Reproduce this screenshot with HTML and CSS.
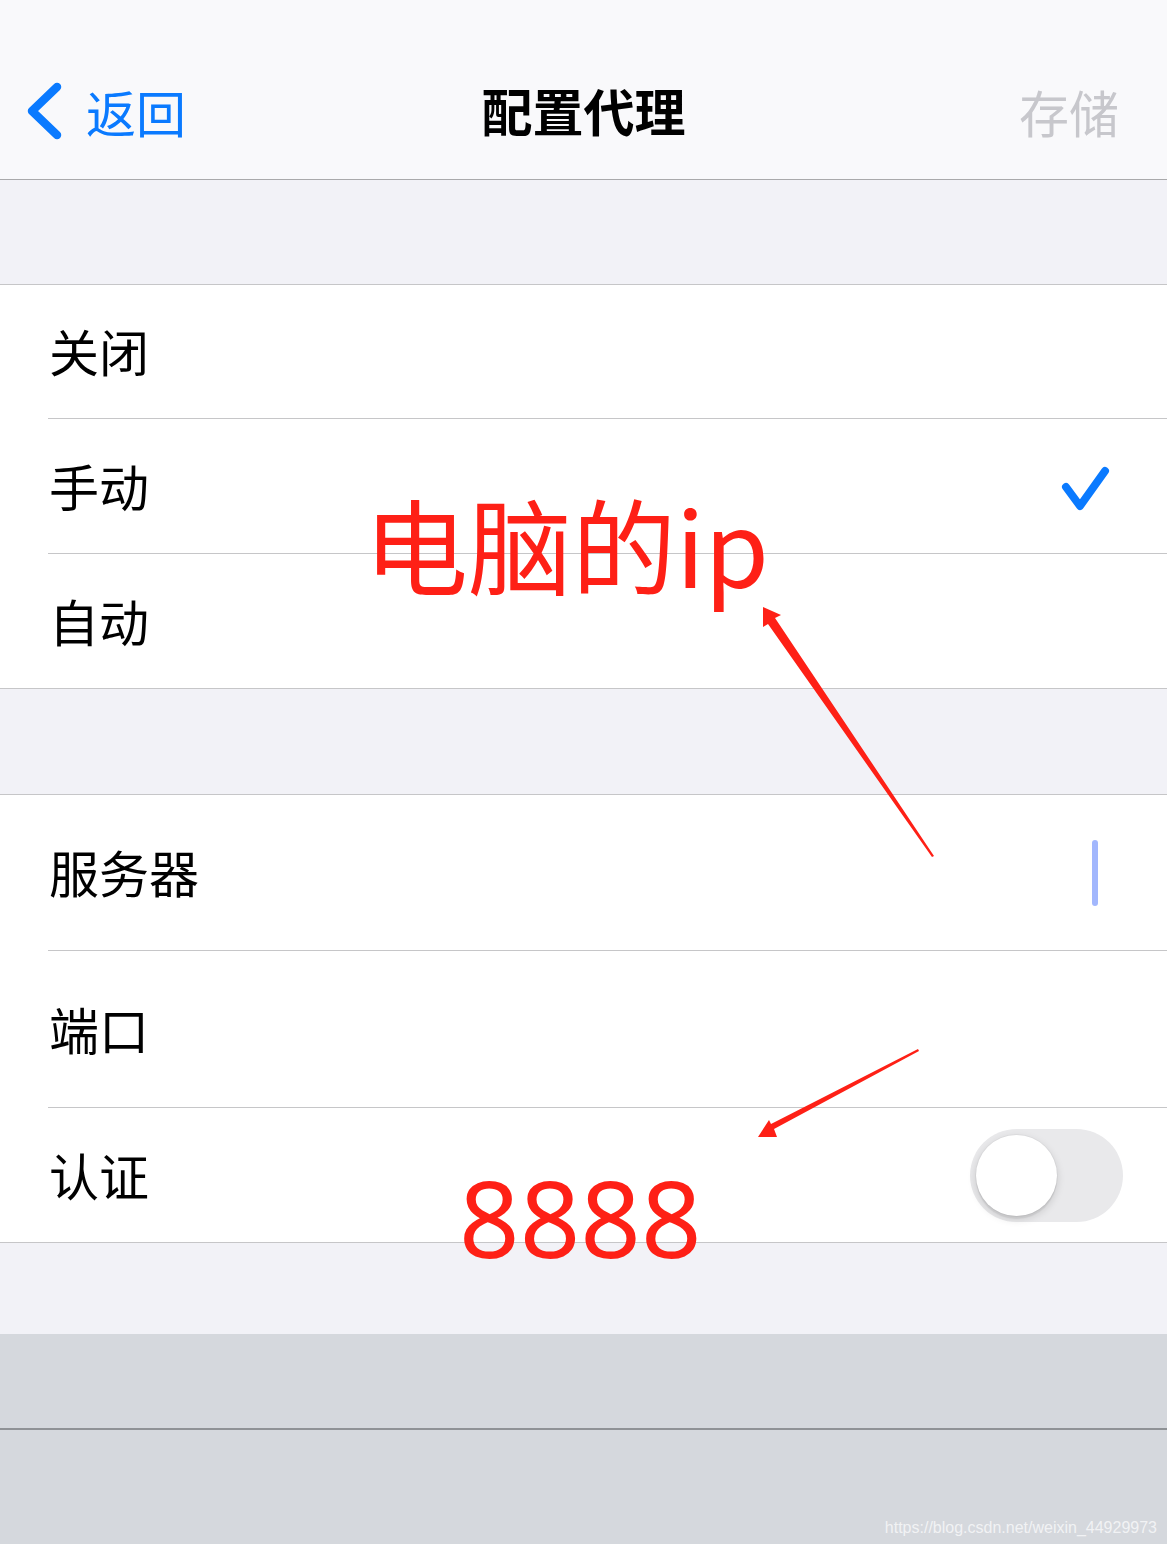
FILE: index.html
```html
<!DOCTYPE html>
<html lang="zh-CN">
<head>
<meta charset="utf-8">
<title>配置代理</title>
<link rel="stylesheet" href="styles.css">
</head>
<body>
<div class="page">
  <header class="nav">
    <div class="nav-left">
      <svg class="chev" width="40" height="60" viewBox="0 0 40 60"><polyline points="31,6 6,30 31,54" fill="none" stroke="#0a7aff" stroke-width="8.5" stroke-linecap="round" stroke-linejoin="round"/></svg>
      <span class="back">返回</span>
    </div>
    <div class="nav-title">配置代理</div>
    <div class="nav-right">存储</div>
  </header>

  <div class="gap g1"></div>

  <section class="group">
    <div class="row"><span class="label">关闭</span></div>
    <div class="row mid"><span class="label">手动</span>
      <svg class="check" width="52" height="50" viewBox="0 0 52 50"><polyline points="6,22 20,41 45,6" fill="none" stroke="#0a7aff" stroke-width="8" stroke-linecap="round" stroke-linejoin="round"/></svg>
    </div>
    <div class="row"><span class="label">自动</span></div>
  </section>

  <div class="gap g2"></div>

  <section class="group">
    <div class="row tall"><span class="label">服务器</span><i class="cursor"></i></div>
    <div class="row tall2"><span class="label">端口</span></div>
    <div class="row"><span class="label">认证</span>
      <div class="toggle"><div class="knob"></div></div>
    </div>
  </section>

  <div class="gap g3"></div>

  <div class="keyboard">
    <div class="kb-top"></div>
    <div class="kb-bottom"><span class="wm">https://blog.csdn.net/weixin_44929973</span></div>
  </div>

  <div class="annot">
    <svg class="arrows" width="1167" height="1544" viewBox="0 0 1167 1544">
      <polygon points="763,607 781,615 775,618 934,856 932,857 768,624 763,627" fill="#fe2016"/>
      <polygon points="918,1049 919,1051 774,1129 777,1137 758,1137 769,1120 771,1124" fill="#fe2016"/>
    </svg>
    <span class="note n-ip">电脑的ip</span>
    <span class="note n-port">8888</span>
  </div>
</div>
</body>
</html>
```

FILE: styles.css
```css
* { box-sizing: border-box; }
html, body { margin: 0; padding: 0; }
body {
  width: 1167px;
  height: 1544px;
  overflow: hidden;
  background: #d5d8dd;
  font-family: "Noto Sans CJK SC", "Noto Sans", sans-serif;
  color: #000;
}
.page {
  position: relative;
  width: 1167px;
  height: 1544px;
  display: flex;
  flex-direction: column;
}

.nav {
  flex: none;
  height: 180px;
  padding-top: 42px;
  background: #f9f9fb;
  border-bottom: 1px solid #a9a9ab;
  display: grid;
  grid-template-columns: 1fr auto 1fr;
  align-items: center;
}
.nav-left { display: flex; align-items: center; padding-left: 26px; }
.chev { display: block; margin-top: 1px; }
.back { color: #0a7aff; font-size: 50px; line-height: 1; margin-left: 20px; }
.nav-title { font-size: 51px; font-weight: 700; line-height: 1; }
.nav-right { justify-self: end; padding-right: 48px; color: #c7c7cc; font-size: 50px; line-height: 1; }

.gap { flex: none; background: #f2f2f7; }
.g1 { height: 104px; }
.g2 { height: 105px; }
.g3 { height: 91px; }

.group {
  flex: none;
  background: #fff;
  border-top: 1px solid #c6c6c8;
  border-bottom: 1px solid #c6c6c8;
  padding-left: 48px;
}
.row {
  height: 134px;
  display: flex;
  align-items: center;
  justify-content: space-between;
  padding-left: 1px;
  padding-right: 45px;
  border-bottom: 1px solid #c6c6c8;
  font-size: 50px;
  line-height: 1;
}
.label { margin-top: -3px; }
.row.mid { height: 135px; }
.row.tall { height: 156px; }
.row.tall2 { height: 157px; }
.row:last-child { border-bottom: none; height: 134px; }
.check { display: block; margin-right: 10px; margin-top: 8px; }
.cursor {
  display: block;
  width: 6px;
  height: 66px;
  border-radius: 3px;
  background: #a2b7fd;
  margin-right: 24px;
  margin-top: 1px;
}
.toggle {
  width: 153px;
  height: 93px;
  border-radius: 47px;
  background: #e9e9eb;
  margin-right: -1px;
  margin-top: 1px;
  padding: 6px;
}
.knob {
  width: 81px;
  height: 81px;
  border-radius: 50%;
  background: #fff;
  box-shadow: 0 3px 8px rgba(0,0,0,0.15), 0 3px 1px rgba(0,0,0,0.06), 0 0 0 1px rgba(0,0,0,0.03);
}

.keyboard { flex: 1; background: #d5d8dd; display: flex; flex-direction: column; }
.kb-top { flex: none; height: 96px; border-bottom: 2px solid #8f9296; }
.kb-bottom { flex: 1; display: flex; justify-content: flex-end; align-items: flex-end; padding: 0 10px 8px 0; }
.wm {
  font-family: "Liberation Sans", Arial, sans-serif;
  font-size: 16px;
  color: rgba(255,255,255,0.7);
  line-height: 1;
}

.annot { position: absolute; left: 0; top: 0; width: 1167px; height: 1544px; pointer-events: none; }
.arrows { position: absolute; left: 0; top: 0; }
.note { position: absolute; color: #fe2016; line-height: 1; white-space: nowrap; }
.n-ip { left: 364px; top: 491px; font-size: 104px; }
.n-port { left: 459px; top: 1164px; font-size: 106px; font-family: "Noto Sans", "Noto Sans CJK SC", sans-serif; }
```
